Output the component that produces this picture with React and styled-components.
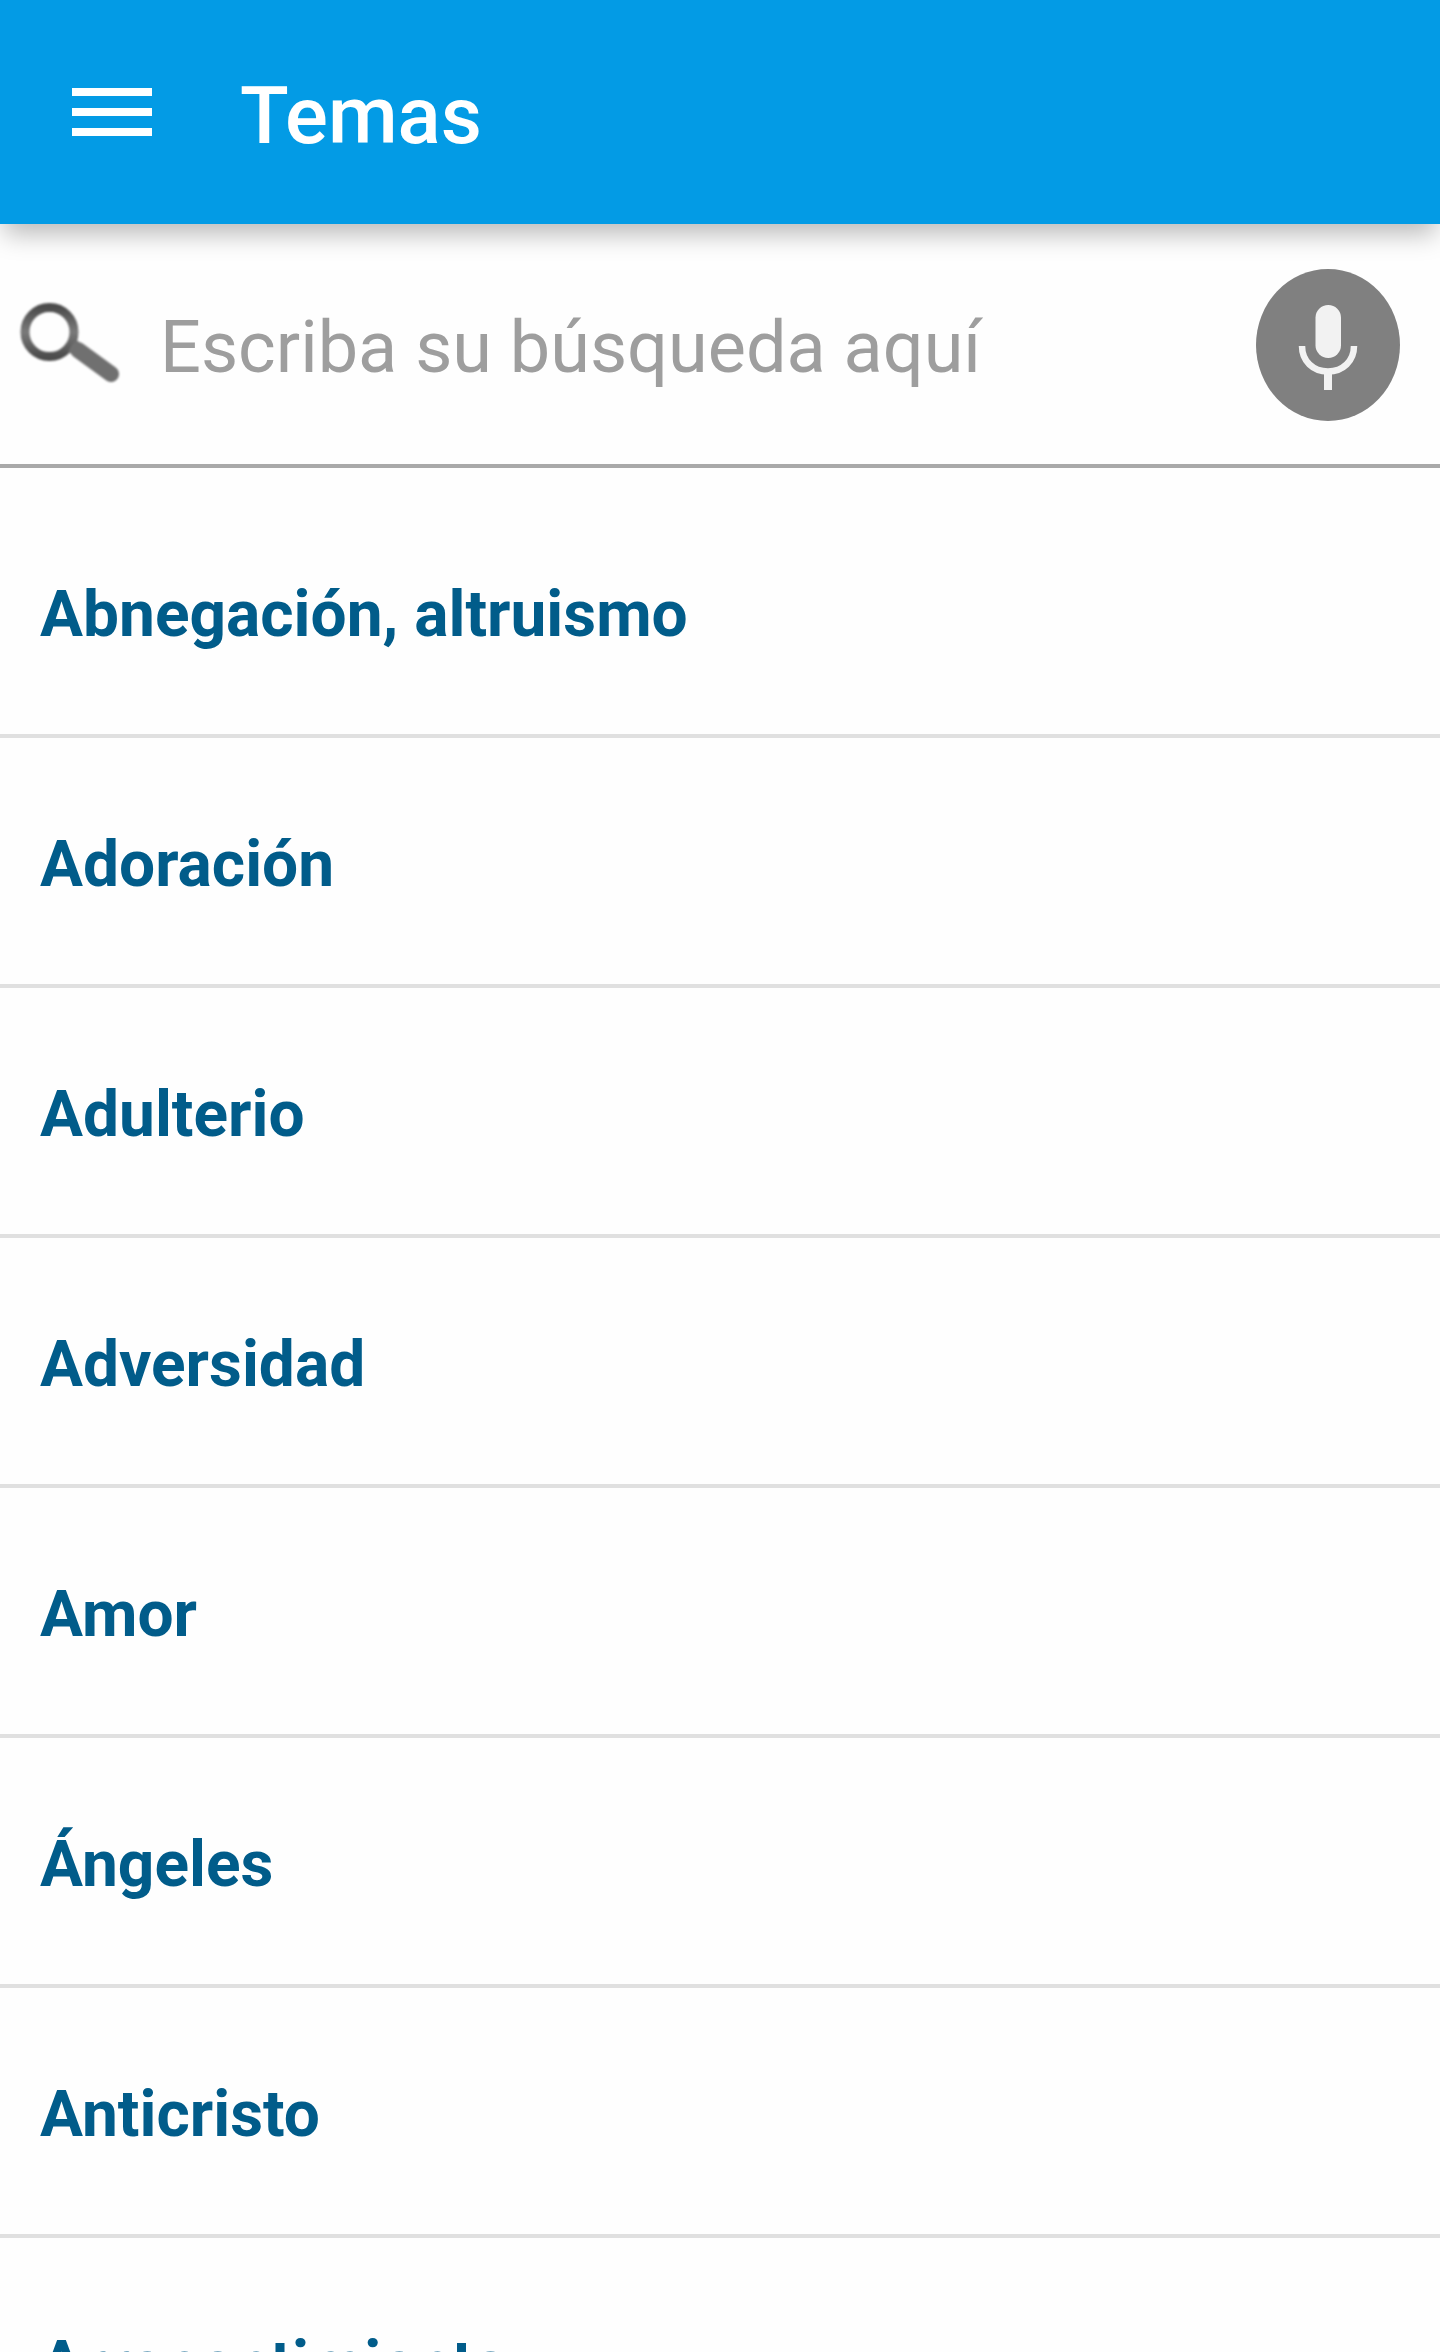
import { useState } from "react";
import styled, { createGlobalStyle } from "styled-components";

const TOPICS = [
  "Abnegación, altruismo",
  "Adoración",
  "Adulterio",
  "Adversidad",
  "Amor",
  "Ángeles",
  "Anticristo",
  "Arrepentimiento",
];

const MenuIcon = () => (
  <svg width="80" height="48" viewBox="0 0 80 48" fill="#fff" aria-hidden="true">
    <rect width="80" height="8" />
    <rect y="20" width="80" height="8" />
    <rect y="40" width="80" height="8" />
  </svg>
);

const MagnifierIcon = () => (
  <MagnifierSvg viewBox="0 5 104 88" fill="none" aria-hidden="true">
    <defs>
      <linearGradient id="ring" x1="0" y1="0" x2="0" y2="1">
        <stop offset="0" stopColor="#4c4c4c" />
        <stop offset="0.5" stopColor="#7a7a7a" />
        <stop offset="1" stopColor="#4c4c4c" />
      </linearGradient>
    </defs>
    <circle cx="33.5" cy="36" r="24.5" stroke="url(#ring)" strokeWidth="9" />
    <path d="M56 49.5L95 78" stroke="#707070" strokeWidth="14" />
    <path d="M62 54L95 78" stroke="#707070" strokeWidth="16" strokeLinecap="round" />
  </MagnifierSvg>
);

const MicIcon = () => (
  <svg width="144" height="152" viewBox="0 0 144 152" fill="none" aria-hidden="true">
    <ellipse cx="72" cy="76" rx="72" ry="76" fill="#808080" />
    <rect x="59.5" y="36" width="25.5" height="53" rx="12.7" fill="#f2f2f2" />
    <path
      d="M46 77C46 92 57 102.5 72 102.5S98 92 98 77"
      stroke="#f2f2f2"
      strokeWidth="6.5"
    />
    <path d="M72 101V121" stroke="#f2f2f2" strokeWidth="8" />
  </svg>
);

const App = () => {
  const [keyword, setKeyword] = useState("");

  const topics = TOPICS.filter((topic) =>
    topic.toLowerCase().includes(keyword.toLowerCase())
  );

  return (
    <>
      <GlobalStyle />
      <Screen>
        <AppBar>
          <IconButton type="button" aria-label="Menú">
            <MenuIcon />
          </IconButton>
          <Title>Temas</Title>
        </AppBar>
        <SearchBar role="search">
          <SearchLabel htmlFor="search" aria-label="Buscar">
            <MagnifierIcon />
          </SearchLabel>
          <SearchInput
            id="search"
            type="text"
            placeholder="Escriba su búsqueda aquí"
            value={keyword}
            onChange={(e) => setKeyword(e.target.value)}
          />
          <IconButton type="button" aria-label="Búsqueda por voz">
            <MicIcon />
          </IconButton>
        </SearchBar>
        <TopicList>
          {topics.map((topic) => (
            <li key={topic}>
              <TopicLink href="#">{topic}</TopicLink>
            </li>
          ))}
        </TopicList>
      </Screen>
    </>
  );
};

const GlobalStyle = createGlobalStyle`
  * {
    box-sizing: border-box;
  }

  body {
    margin: 0;
    background-color: #fefefe;
    font-family: Roboto, "Liberation Sans", sans-serif;
  }
`;

const Screen = styled.div`
  display: flex;
  flex-direction: column;
  height: 100vh;
  overflow: hidden;
`;

const AppBar = styled.header`
  display: flex;
  align-items: center;
  flex-shrink: 0;
  gap: 88px;
  padding: 64px 72px;
  background-color: #039be5;
  box-shadow: 0 14px 24px -4px rgba(0, 0, 0, 0.27);
  z-index: 1;
`;

const Title = styled.h1`
  margin: 0;
  padding-top: 8px;
  color: #fff;
  font-size: 80px;
  font-weight: 500;
  line-height: 88px;
`;

const IconButton = styled.button`
  display: flex;
  flex-shrink: 0;
  padding: 0;
  border: none;
  background: none;
  cursor: pointer;
`;

const SearchBar = styled.div`
  display: flex;
  align-items: center;
  flex-shrink: 0;
  gap: 40px;
  padding: 45px 40px 43px 16px;
  border-bottom: 4px solid #a9a9a9;
`;

const SearchLabel = styled.label`
  display: flex;
  flex-shrink: 0;
`;

const MagnifierSvg = styled.svg`
  width: 104px;
  height: 88px;
  filter: blur(1px);
`;

const SearchInput = styled.input`
  flex: 1;
  min-width: 0;
  padding: 6px 0 0;
  border: none;
  outline: none;
  background: none;
  color: #333;
  font-family: inherit;
  font-size: 72px;
  line-height: 88px;

  &::placeholder {
    color: #9e9e9e;
    opacity: 1;
  }
`;

const TopicList = styled.ul`
  flex: 1;
  min-height: 0;
  margin: 0;
  padding: 20px 0 0;
  overflow-y: auto;
  list-style: none;
  scrollbar-width: none;
`;

const TopicLink = styled.a`
  display: block;
  padding: 89px 40px 81px;
  border-bottom: 4px solid #e0e0e0;
  color: #015c8a;
  font-size: 64px;
  font-weight: 700;
  line-height: 76px;
  text-decoration: none;
`;

export default App;
